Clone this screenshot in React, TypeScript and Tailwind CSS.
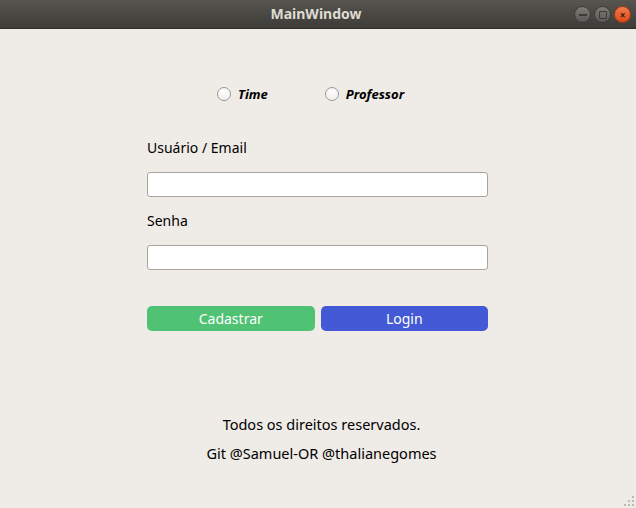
import React from 'react';

const font = { fontFamily: '"Noto Sans", "Open Sans", sans-serif' };

const Radio = ({ label }: { label: string }) => (
  <label className="flex items-center gap-[7px] cursor-pointer">
    <span className="w-[14px] h-[14px] rounded-full border border-[#9c9a95] bg-gradient-to-b from-white to-[#f2f0ed] shadow-[inset_0_1px_1px_rgba(0,0,0,0.05)]" />
    <span className="text-[13px] font-bold italic text-black leading-5">{label}</span>
  </label>
);

const App: React.FC = () => {
  return (
    <div className="w-[636px] h-[508px] flex flex-col bg-[#efebe7] text-black overflow-hidden" style={font}>
      {/* title bar */}
      <div className="h-[29px] shrink-0 relative flex items-center justify-center bg-gradient-to-b from-[#57554f] to-[#3d3c38] border-b border-[#2e2d2a]">
        <span className="text-[14px] font-bold text-[#dfdbd2] leading-none mr-[4px]">MainWindow</span>
        <div className="absolute right-[5px] top-[6px] flex gap-[3px]">
          <span className="w-[17px] h-[17px] rounded-full bg-gradient-to-b from-[#7d7b76] to-[#5a5955] border border-[#3a3935] flex items-center justify-center">
            <span className="w-[8px] h-[2px] bg-[#3c3b37]" />
          </span>
          <span className="w-[17px] h-[17px] rounded-full bg-gradient-to-b from-[#7d7b76] to-[#5a5955] border border-[#3a3935] flex items-center justify-center">
            <span className="w-[8px] h-[8px] border-[1.5px] border-[#3c3b37] rounded-[1px]" />
          </span>
          <span className="w-[17px] h-[17px] rounded-full bg-gradient-to-b from-[#f47b4c] to-[#dd4814] border border-[#a53a12] flex items-center justify-center text-[10px] leading-none text-[#3c1a0a] font-bold">
            ×
          </span>
        </div>
      </div>

      {/* form */}
      <div className="flex-1 relative">
        <div className="w-[341px] ml-[147px] pt-[55px] flex flex-col">
          <div className="flex items-center pl-[70px] gap-[57px] h-5">
            <Radio label="Time" />
            <Radio label="Professor" />
          </div>

          <div className="mt-[34px] text-[14px] leading-5">Usuário / Email</div>
          <input
            type="text"
            className="mt-[14px] h-[25px] w-full rounded-[3px] border border-[#a8a49e] bg-white px-2 text-[14px] outline-none"
          />

          <div className="mt-[14px] text-[14px] leading-5">Senha</div>
          <input
            type="password"
            className="mt-[14px] h-[25px] w-full rounded-[3px] border border-[#a8a49e] bg-white px-2 text-[14px] outline-none"
          />

          <div className="mt-[36px] grid grid-cols-2 gap-[6px]">
            <button className="h-[25px] rounded-[5px] bg-[#50c274] text-white text-[14px] leading-none">Cadastrar</button>
            <button className="h-[25px] rounded-[5px] bg-[#4359d6] text-white text-[14px] leading-none">Login</button>
          </div>

          <div className="mt-[83px] pl-[8px] flex flex-col items-center gap-[9px] text-[14.5px] leading-5">
            <span>Todos os direitos reservados.</span>
            <span>Git @Samuel-OR @thalianegomes</span>
          </div>
        </div>

        {/* resize grip */}
        <div className="absolute right-[2px] bottom-[2px] grid grid-cols-3 gap-[2px]">
          {[0, 0, 1, 0, 1, 1, 1, 1, 1].map((v, i) => (
            <span key={i} className={v ? 'w-[2px] h-[2px] bg-[#bdb9b3]' : 'w-[2px] h-[2px]'} />
          ))}
        </div>
      </div>
    </div>
  );
};

export default App;
